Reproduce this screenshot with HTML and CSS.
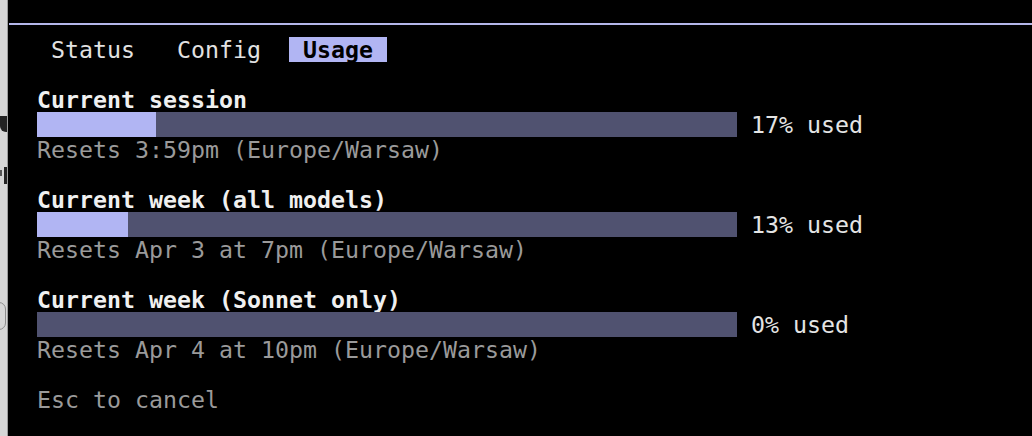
FILE: index.html
```html
<!DOCTYPE html>
<html>
<head>
<meta charset="utf-8">
<link rel="stylesheet" href="styles.css">
</head>
<body>
<div class="strip">
  <div class="ghost g1"></div>
  <div class="ghost-pair">
    <div class="ghost-dot"></div>
    <div class="ghost g2"></div>
  </div>
  <div class="ghost-box"></div>
</div>
<main class="term">
  <div class="line tabs">
    <span class="tab t-status">Status</span>
    <span class="tab t-config">Config</span>
    <span class="tab active">Usage</span>
  </div>
  <div class="line"></div>

  <div class="line title">Current session</div>
  <div class="line meter">
    <div class="bar"><div class="fill" style="width:17%"></div></div>
    <span class="pct">17% used</span>
  </div>
  <div class="line muted">Resets 3:59pm (Europe/Warsaw)</div>
  <div class="line"></div>

  <div class="line title">Current week (all models)</div>
  <div class="line meter">
    <div class="bar"><div class="fill" style="width:13%"></div></div>
    <span class="pct">13% used</span>
  </div>
  <div class="line muted">Resets Apr 3 at 7pm (Europe/Warsaw)</div>
  <div class="line"></div>

  <div class="line title">Current week (Sonnet only)</div>
  <div class="line meter">
    <div class="bar"><div class="fill" style="width:0%"></div></div>
    <span class="pct">0% used</span>
  </div>
  <div class="line muted">Resets Apr 4 at 10pm (Europe/Warsaw)</div>
  <div class="line"></div>

  <div class="line muted">Esc to cancel</div>
</main>
</body>
</html>
```
FILE: styles.css
```css
html, body {
  margin: 0;
  padding: 0;
  height: 100%;
}
body {
  background: #000;
  display: flex;
  overflow: hidden;
}
.strip {
  width: 7px;
  flex: none;
  background: #d6d6d6;
  border-right: 1px solid #9c9c9c;
  display: flex;
  flex-direction: column;
  align-items: flex-end;
  overflow: hidden;
}
.ghost {
  flex: none;
  background: #232323;
}
.g1 {
  margin-top: 116px;
  width: 7px;
  height: 16px;
  border-radius: 0 0 0 6px;
}
.ghost-pair {
  margin-top: 35px;
  display: flex;
  align-items: flex-start;
  gap: 2px;
  flex: none;
}
.ghost-dot {
  margin-top: 3px;
  width: 2px;
  height: 6px;
  background: #555;
}
.g2 {
  width: 3px;
  height: 17px;
}
.ghost-box {
  margin-top: 118px;
  margin-right: 1px;
  width: 20px;
  height: 26px;
  border: 1px solid #8c8c8c;
  border-radius: 7px;
  flex: none;
}
.term {
  flex: 1;
  margin-top: 23px;
  margin-left: 1px;
  border-top: 2px solid #b4b7ea;
  padding: 12px 0 0 28px;
  font-family: "DejaVu Sans Mono", monospace;
  font-size: 23.25px;
  line-height: 25px;
  color: #e4e4e4;
}
.line {
  height: 25px;
  white-space: nowrap;
}
.tabs {
  display: flex;
}
.tab { color: #e2e2e2; }
.t-status { margin-left: 14px; }
.t-config { margin-left: 42px; }
.tab.active {
  margin-left: 28px;
  padding: 0 14px;
  background: #b1b5f3;
  color: #000;
  font-weight: bold;
}
.title {
  font-weight: bold;
  color: #f0f0f0;
}
.muted {
  color: #9a9a9a;
}
.meter {
  display: flex;
  align-items: stretch;
}
.bar {
  width: 700px;
  height: 25px;
  background: #505270;
  display: flex;
}
.fill {
  background: #b1b5f3;
  height: 100%;
}
.pct {
  margin-left: 14px;
  color: #e4e4e4;
}
```
